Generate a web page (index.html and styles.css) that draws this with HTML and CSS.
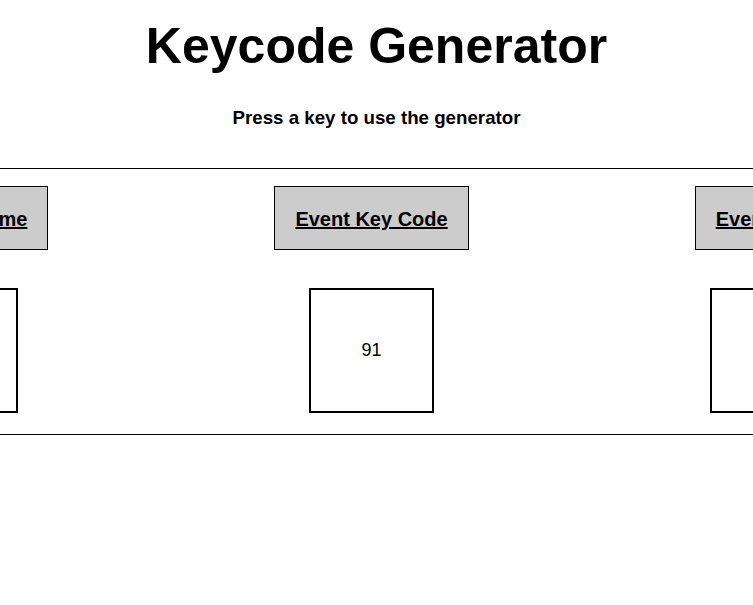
FILE: index.html
```html
<!DOCTYPE html>
<html lang="en">
<head>
<meta charset="utf-8">
<title>Keycode Generator</title>
<link rel="stylesheet" href="styles.css">
</head>
<body>
<h1 class="title">Keycode Generator</h1>
<h3 class="subtitle">Press a key to use the generator</h3>
<section class="panel">
  <div class="row">
    <div class="column">
      <div class="label">Keycode Name</div>
      <div class="value">Meta</div>
    </div>
    <div class="column">
      <div class="label">Event Key Code</div>
      <div class="value">91</div>
    </div>
    <div class="column">
      <div class="label">Event Name</div>
      <div class="value"></div>
    </div>
  </div>
</section>
</body>
</html>
```
FILE: styles.css
```css
html, body {
  margin: 0;
  padding: 0;
  background: #ffffff;
}

body {
  font-family: "Liberation Sans", Arial, Helvetica, sans-serif;
  color: #000000;
  overflow-x: hidden;
}

.title {
  margin: 17px 0 0;
  font-size: 50px;
  line-height: 58px;
  font-weight: bold;
  text-align: center;
}

.subtitle {
  margin: 32px 0 0;
  font-size: 18.72px;
  line-height: 22px;
  font-weight: bold;
  text-align: center;
}

.panel {
  margin-top: 39px;
  border-top: 1px solid #000000;
  border-bottom: 1px solid #000000;
  padding: 17px 0 21px;
  overflow: hidden;
}

.row {
  display: flex;
  gap: 226px;
  margin-left: -137px;
}

.column {
  display: flex;
  flex-direction: column;
  align-items: center;
  gap: 38px;
  flex: none;
}

.label {
  background: #cccccc;
  border: 1px solid #000000;
  padding: 21px 20px 19px;
  font-size: 20px;
  line-height: 22px;
  font-weight: bold;
  text-decoration: underline;
  white-space: nowrap;
}

.value {
  box-sizing: border-box;
  width: 125px;
  height: 125px;
  border: 2px solid #000000;
  display: flex;
  align-items: center;
  justify-content: center;
  font-size: 18px;
}
```
